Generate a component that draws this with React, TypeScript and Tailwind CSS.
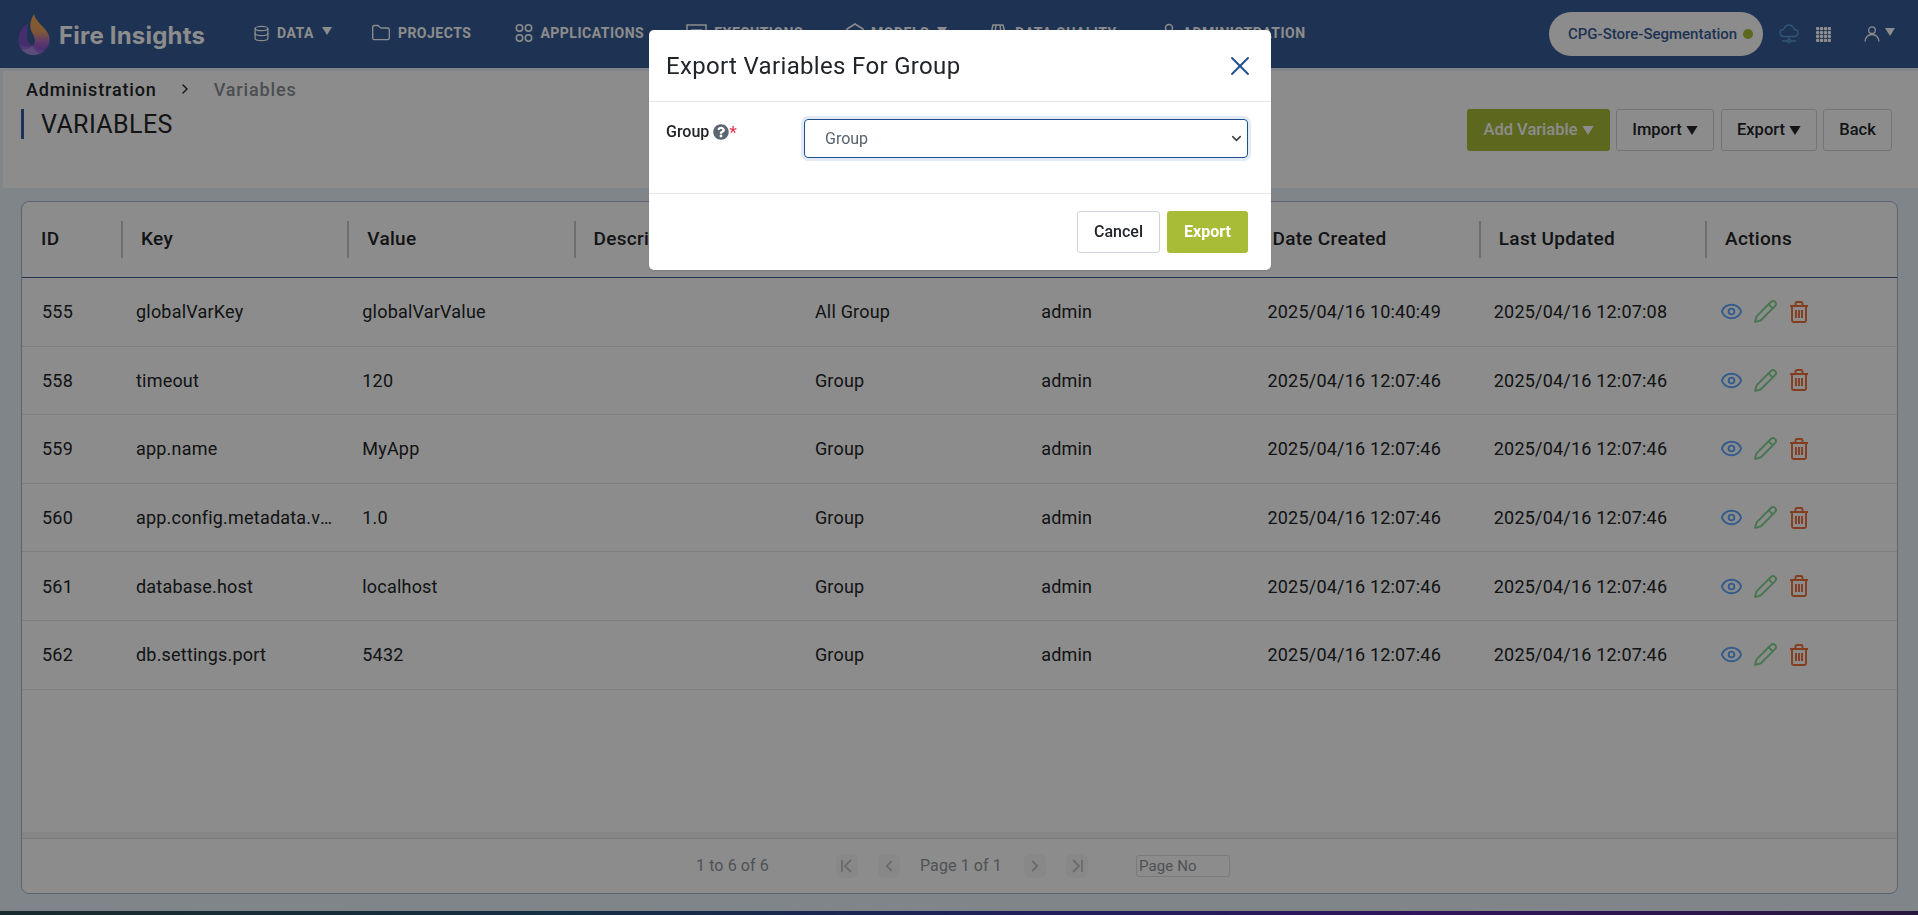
import React from 'react';
import { ChevronDown, ChevronLeft, ChevronRight, Database, Eye, Folder, Pencil, X } from 'lucide-react';
import { FaQuestionCircle } from 'react-icons/fa';

const rows = [
  { id: '555', key: 'globalVarKey', value: 'globalVarValue', group: 'All Group', created: '2025/04/16 10:40:49', updated: '2025/04/16 12:07:08' },
  { id: '558', key: 'timeout', value: '120', group: 'Group', created: '2025/04/16 12:07:46', updated: '2025/04/16 12:07:46' },
  { id: '559', key: 'app.name', value: 'MyApp', group: 'Group', created: '2025/04/16 12:07:46', updated: '2025/04/16 12:07:46' },
  { id: '560', key: 'app.config.metadata.version', value: '1.0', group: 'Group', created: '2025/04/16 12:07:46', updated: '2025/04/16 12:07:46' },
  { id: '561', key: 'database.host', value: 'localhost', group: 'Group', created: '2025/04/16 12:07:46', updated: '2025/04/16 12:07:46' },
  { id: '562', key: 'db.settings.port', value: '5432', group: 'Group', created: '2025/04/16 12:07:46', updated: '2025/04/16 12:07:46' },
];

const headers = ['ID', 'Key', 'Value', 'Description', 'Group', 'Created By', 'Date Created', 'Last Updated', 'Actions'];

const Caret = ({ className }: { className: string }) => (
  <svg viewBox="0 0 10 8" className={className} fill="currentColor">
    <path d="M0 0h10L5 8z" />
  </svg>
);

const Logo = () => (
  <svg viewBox="0 0 32 42" className="w-8 h-[41px]">
    <defs>
      <linearGradient id="flame" x1="0" y1="0" x2="0" y2="1">
        <stop offset="0" stopColor="#f2a852" />
        <stop offset="0.5" stopColor="#e8a064" />
        <stop offset="0.8" stopColor="#a868c8" />
        <stop offset="1" stopColor="#8c50d0" />
      </linearGradient>
    </defs>
    {/* left purple crescent */}
    <path d="M10 10C3 13 0 20 0 27c0 9 7 15 16 15 6 0 10-2 12-6-6 1-11 0-13-3-3-1-6-4-6-9 0-5 0-10 1-14z" fill="#7c55c8" />
    <path d="M1 31c5 3 10 3 14 1 3 4 8 5 12 4-3 4-7 6-11 6-7 0-13-5-15-11z" fill="#8e6cd0" />
    <path d="M3 36c4 1 8 0 11-3 2 4 5 6 8 7-2 1-4 2-6 2-5 0-10-2-13-6z" fill="#a78cdc" />
    {/* gold flame */}
    <path d="M16 0c-4 7-5 13-2 19 3 5 4 10 1 14 3 3 7 4 13 3 3-3 4-6 4-10C32 15 18 10 16 0z" fill="url(#flame)" />
  </svg>
);

const AppsIcon = () => (
  <svg viewBox="0 0 18 20" className="w-[18px] h-5" fill="none" stroke="currentColor" strokeWidth="1.5">
    <circle cx="4.5" cy="5" r="3.2" />
    <circle cx="13.5" cy="5" r="3.2" />
    <circle cx="4.5" cy="15" r="3.2" />
    <circle cx="13.5" cy="15" r="3.2" />
  </svg>
);

const ExecutionsIcon = () => (
  <svg viewBox="0 0 21 18" className="w-[21px] h-[18px]" fill="none" stroke="currentColor" strokeWidth="1.5">
    <rect x="1" y="1" width="19" height="16" />
    <path d="M5 6h11M5 10h7" />
  </svg>
);

const ModelsIcon = () => (
  <svg viewBox="0 0 18 20" className="w-[18px] h-5" fill="none" stroke="currentColor" strokeWidth="1.5">
    <path d="M9 1l8 5v8l-8 5-8-5V6z" />
  </svg>
);

const QualityIcon = () => (
  <svg viewBox="0 0 20 20" className="w-5 h-5" fill="none" stroke="currentColor" strokeWidth="1.5">
    <path d="M5 2h10l4 16H1zM8 2L6 18M12 2l2 16" />
  </svg>
);

const AdminIcon = () => (
  <svg viewBox="0 0 14 20" className="w-[14px] h-5" fill="none" stroke="currentColor" strokeWidth="1.5">
    <circle cx="7" cy="5" r="3.5" />
    <path d="M1 19c0-5 2-8 6-8s6 3 6 8z" />
  </svg>
);

const CloudIcon = () => (
  <svg viewBox="0 0 20 20" className="w-5 h-5 text-[#5a9bdc]" fill="none" stroke="currentColor" strokeWidth="1.4">
    <path d="M5 12.500C2.500 12.500 1 11 1 9c0-2 1.500-3.500 3.500-3.500C5.500 3 7.500 1 10 1s4.500 2 5.500 4.500C17.500 5.500 19 7 19 9c0 2-1.500 3.500-4 3.500z" />
    <path d="M10 12.500V17M3 17h5M12 17h5" />
    <circle cx="10" cy="17" r="1.600" />
  </svg>
);

const GridIcon = () => (
  <svg viewBox="0 0 15 15" className="w-[15px] h-[15px] text-white" fill="currentColor">
    {[0, 1, 2, 3].map((r) =>
      [0, 1, 2, 3].map((c) => <rect key={`${r}-${c}`} x={c * 3.9} y={r * 3.9} width="3.300" height="3.300" rx="1" />)
    )}
  </svg>
);

const UserIcon = () => (
  <svg viewBox="0 0 16 16" className="w-4 h-4 text-white" fill="none" stroke="currentColor" strokeWidth="1.3">
    <circle cx="8" cy="4.200" r="3.300" />
    <path d="M1 15.500c.5-4 3-7 7-7s6.500 3 7 7" />
  </svg>
);

const TrashIcon = () => (
  <svg viewBox="0 0 20 22" className="ml-[1px] w-5 h-[22px] text-[#f0703a]" fill="none" stroke="currentColor" strokeWidth="1.9">
    <path d="M1 5h18M6.500 5V2.500c0-.8.500-1.500 1.500-1.500h4c1 0 1.500.7 1.500 1.500V5M3 5v14.500c0 .8.700 1.500 1.500 1.500h11c.8 0 1.500-.7 1.500-1.500V5M7 9v8M10 9v8M13 9v8" />
  </svg>
);

const LastPageIcon = () => (
  <svg viewBox="0 0 16 16" className="w-4 h-4" fill="none" stroke="currentColor" strokeWidth="1.9">
    <path d="M4 2l6 6-6 6M13 2v12" />
  </svg>
);

const FirstPageIcon = () => (
  <svg viewBox="0 0 16 16" className="w-4 h-4" fill="none" stroke="currentColor" strokeWidth="1.9">
    <path d="M12 2L6 8l6 6M3 2v12" />
  </svg>
);

const NavItem = ({ icon, label, caret, className = '' }: { icon: React.ReactNode; label: string; caret?: boolean; className?: string }) => (
  <div className={`flex items-center gap-[7px] h-5 text-white ${className}`}>
    {icon}
    <span className="text-[14px] font-bold tracking-[0.5px]">{label}</span>
    {caret && <Caret className="w-[10px] h-2 ml-[1px] -mt-1" />}
  </div>
);

const ToolButton = ({ label, caret, className }: { label: string; caret?: boolean; className: string }) => (
  <button className={`h-[42px] rounded-[3px] flex items-center justify-center gap-1 text-[16.500px] font-medium ${className}`}>
    {label}
    {caret && <Caret className="w-3 h-[9px]" />}
  </button>
);

const PagerButton = ({ children }: { children: React.ReactNode }) => (
  <span className="w-[22px] h-[24px] rounded-md bg-[#f8f8f8] flex items-center justify-center text-[#c4c4c4]">{children}</span>
);

export default function App() {
  return (
    <div className="relative w-[1918px] h-[915px] overflow-hidden bg-[#e8f3fa] flex flex-col font-['Roboto',sans-serif] text-[#212529]">
      <header className="h-[68px] shrink-0 bg-[#375d97] flex items-center pl-[18px] pr-[23px]">
        <Logo />
        <span className="ml-[9px] mt-[3px] w-[146px] text-[24px] leading-none font-bold text-white font-['Inter',sans-serif] tracking-[0.2px] whitespace-nowrap">Fire Insights</span>
        <nav className="ml-[48px] flex items-center gap-[43px] -mt-[2px]">
          <NavItem icon={<Database size={17} strokeWidth={1.8} />} label="DATA" caret />
          <NavItem icon={<Folder size={20} strokeWidth={1.6} />} label="PROJECTS" className="-ml-[4px]" />
          <NavItem icon={<AppsIcon />} label="APPLICATIONS" className="ml-[1px]" />
          <NavItem icon={<ExecutionsIcon />} label="EXECUTIONS" className="-ml-[1px]" />
          <NavItem icon={<ModelsIcon />} label="MODELS" caret />
          <NavItem icon={<QualityIcon />} label="DATA QUALITY" className="-ml-[2px]" />
          <NavItem icon={<AdminIcon />} label="ADMINISTRATION" className="ml-[2px]" />
        </nav>
        <div className="ml-auto flex items-center">
          <div className="w-[214px] h-[44px] rounded-full bg-[#ffffff] flex items-center pl-[19px] gap-[6px] text-[15px] font-medium text-[#375d97] whitespace-nowrap">
            CPG-Store-Segmentation
            <span className="w-[10px] h-[10px] rounded-full bg-[#a9bc38]" />
          </div>
          <div className="ml-[16px]"><CloudIcon /></div>
          <div className="ml-[17px]"><GridIcon /></div>
          <div className="ml-[33px] flex items-start gap-[5px]">
            <UserIcon />
            <Caret className="w-[10px] h-2 text-white mt-[2px]" />
          </div>
        </div>
      </header>

      <section className="mt-[3px] ml-[3px] h-[117px] shrink-0 bg-white relative flex justify-between">
        <div>
          <div className="flex items-center h-9 pl-[23px] text-[18px] tracking-[0.85px]">
            <span className="font-medium text-[#212529]">Administration</span>
            <ChevronRight size={16} className="ml-[20px] text-[#212529]" />
            <span className="ml-[21px] font-medium text-[#8a8f96]">Variables</span>
          </div>
          <div className="ml-[18px] mt-[2px] h-[30px] border-l-[3px] border-[#375d97] pl-[17px] flex items-center text-[25px] tracking-[0.4px] leading-none text-[#212529]">
            VARIABLES
          </div>
        </div>
        <div className="flex gap-[6px] pt-[38px] pr-[26px]">
          <ToolButton label="Add Variable" caret className="w-[143px] bg-[#a9bc38] text-white" />
          <ToolButton label="Import" caret className="w-[98px] border border-[#cfd4da] text-[#212529]" />
          <ToolButton label="Export" caret className="ml-[1px] w-[96px] border border-[#cfd4da] text-[#212529]" />
          <ToolButton label="Back" className="w-[69px] border border-[#cfd4da] text-[#212529]" />
        </div>
      </section>

      <main className="mt-[13px] ml-[21px] mr-[20px] h-[693px] shrink-0 rounded-lg border border-[#a9b7c6] bg-white flex flex-col overflow-hidden">
        <div className="h-[76px] shrink-0 border-b border-[#375d97] grid grid-cols-[101px_repeat(7,226.3px)_1fr] items-center">
          {headers.map((h, i) => (
            <div key={h} className={`h-[37px] flex items-center text-[19px] tracking-[0.3px] font-medium whitespace-nowrap ${i === 0 ? 'pl-[19px]' : 'pl-[18px]'} ${i < 8 ? 'border-r-2 border-[#c9c9c9]' : ''}`}>
              {h}
            </div>
          ))}
        </div>
        <div className="flex-1">
          {rows.map((row) => (
            <div key={row.id} className="h-[68.600px] border-b border-[#e6e6e6] grid grid-cols-[101px_repeat(7,226.3px)_1fr] items-center text-[18px] tracking-[0.2px]">
              <div className="pl-[20px]">{row.id}</div>
              <div className="pl-[13px] pr-[14px] truncate">{row.key}</div>
              <div className="pl-[13px]">{row.value}</div>
              <div />
              <div className="pl-[13px]">{row.group}</div>
              <div className="pl-[13px]">admin</div>
              <div className="pl-[13px] whitespace-nowrap">{row.created}</div>
              <div className="pl-[13px] whitespace-nowrap">{row.updated}</div>
              <div className="pl-[13px] flex items-center gap-[10px]">
                <Eye size={23} strokeWidth={2} className="text-[#5fa8ff]" />
                <Pencil size={25} strokeWidth={1.9} className="text-[#86d894]" />
                <TrashIcon />
              </div>
            </div>
          ))}
        </div>
        <div className="h-[7px] shrink-0 bg-[#f5f5f5] border-b border-[#dedede]" />
        <div className="h-[54px] shrink-0 relative flex items-center text-[16px] tracking-[0.1px] text-[#8f959b] pl-[674px]">
          <span className="w-[140px]">1 to 6 of 6</span>
          <PagerButton><FirstPageIcon /></PagerButton>
          <span className="ml-[20px]"><PagerButton><ChevronLeft size={18} strokeWidth={2.4} /></PagerButton></span>
          <span className="ml-[20px] w-[104px]">Page 1 of 1</span>
          <PagerButton><ChevronRight size={18} strokeWidth={2.4} /></PagerButton>
          <span className="ml-[20px]"><PagerButton><LastPageIcon /></PagerButton></span>
          <input placeholder="Page No" className="ml-[48px] w-[94px] h-[22px] rounded-[3px] border border-[#dedede] px-[2px] text-[15px] placeholder:text-[#8f959b]" />
        </div>
      </main>

      <div className="mt-auto h-1 shrink-0 bg-[linear-gradient(90deg,#2f4f4f_0%,#27587e_30%,#3d3aa8_55%,#5a28a8_75%,#4a2a70_100%)]" />

      <div className="fixed inset-0 bg-black/45 flex justify-center items-start pt-[30px]">
        <div className="ml-[2px] w-[622px] h-[240px] rounded-[5px] bg-white shadow-sm flex flex-col">
          <div className="h-[72px] shrink-0 border-b border-[#e6e6e6] flex items-center justify-between pl-[17px] pr-[15px]">
            <h2 className="text-[24px] tracking-[0.33px] leading-none text-[#212529]">Export Variables For Group</h2>
            <X size={32} strokeWidth={1.4} className="text-[#1f4f8f]" />
          </div>
          <div className="h-[92px] shrink-0 border-b border-[#e6e6e6] flex items-start pl-[17px] pt-[17px]">
            <label className="w-[138px] flex items-center text-[16px] font-medium text-[#212529] mt-[1px]">
              Group
              <FaQuestionCircle size={16} className="ml-[4px] text-[#5c6670]" />
              <span className="text-[#e5334b] text-[17px] leading-none">*</span>
            </label>
            <div className="relative w-[444px] h-[39px] rounded-[4px] border border-[#1f4f8f] ring-[3px] ring-[#e3ecf6]">
              <select defaultValue="Group" className="w-full h-full appearance-none bg-transparent pl-[20px] text-[16px] text-[#59636d] outline-none">
                <option>Group</option>
                <option>All Group</option>
              </select>
              <ChevronDown size={15} strokeWidth={2.4} className="absolute right-[3px] top-[11px] text-[#3a4147] pointer-events-none" />
            </div>
          </div>
          <div className="flex-1 flex items-center justify-end gap-[7px] pr-[23px]">
            <button className="w-[83px] h-[42px] rounded-[3px] border border-[#cfd4da] text-[16px] font-medium text-[#212529]">Cancel</button>
            <button className="w-[81px] h-[42px] rounded-[3px] bg-[#a9bc38] text-[16px] font-bold text-white">Export</button>
          </div>
        </div>
      </div>
    </div>
  );
}
